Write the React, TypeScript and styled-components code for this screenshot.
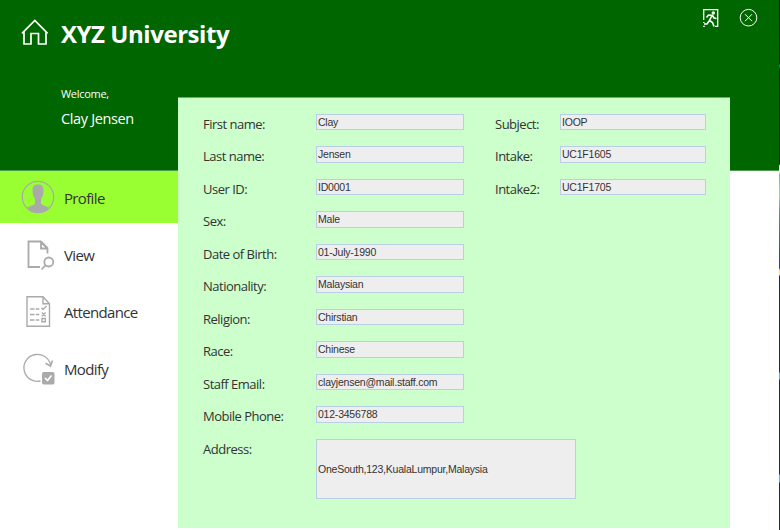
import React from "react";
import styled, { createGlobalStyle } from "styled-components";

const Global = createGlobalStyle`
  * { box-sizing: border-box; }
  html, body { margin: 0; padding: 0; background: #fff; overflow: hidden; }
`;

const ui = `"Open Sans", "Noto Sans", sans-serif`;

const Page = styled.div`
  width: 780px;
  height: 530px;
  display: grid;
  grid-template-columns: 178px 552px 49px 1px;
  grid-template-rows: 97px 74px 357px 2px;
  background: #fff;
  font-family: ${ui};
`;

const Header = styled.header`
  grid-area: 1 / 1 / 3 / 4;
  background: #006600;
  border-bottom: 1px solid #4d994d;
  color: #fff;
  display: flex;
  justify-content: space-between;
  padding: 8px 21px 0 21px;
`;

const Brand = styled.div`
  display: grid;
  grid-template-columns: 40px auto;
  grid-template-rows: 52px auto;
  align-content: start;
`;

const HomeMark = styled.div`
  padding-top: 10px;
  svg { display: block; }
`;

const Title = styled.h1`
  margin: 0;
  font-size: 24px;
  line-height: 52px;
  font-weight: 700;
  letter-spacing: -0.45px;
  white-space: nowrap;
`;

const Greeting = styled.div`
  grid-column: 2;
  padding-top: 25px;
`;

const Welcome = styled.div`
  font-size: 11px;
  line-height: 18px;
  letter-spacing: -0.3px;
`;

const UserName = styled.div`
  font-size: 14.5px;
  line-height: 31px;
  letter-spacing: -0.35px;
`;

const WindowActions = styled.div`
  display: flex;
  gap: 19px;
  align-items: flex-start;
  svg { display: block; }
`;

const Nav = styled.nav`
  grid-area: 3 / 1 / 4 / 2;
  display: flex;
  flex-direction: column;
  gap: 5px;
`;

const NavItem = styled.div<{ $active?: boolean }>`
  height: 52px;
  display: grid;
  grid-template-columns: 43px auto;
  align-items: center;
  padding-left: 21px;
  padding-top: 2px;
  color: #333;
  font-size: 15px;
  letter-spacing: -0.65px;
  background: ${(p) => (p.$active ? "#99ff33" : "transparent")};
  svg { display: block; margin-top: -3px; }
`;

const Panel = styled.main`
  grid-area: 2 / 2 / 4 / 3;
  background: #ccffcc;
  border-top: 1px solid #66b366;
  padding: 15.6px 0 0 25px;
  display: grid;
  grid-template-columns: 292px auto;
  align-content: start;
`;

const Column = styled.div``;

const Row = styled.div<{ $label: number }>`
  display: grid;
  grid-template-columns: ${(p) => p.$label}px auto;
  justify-content: start;
  height: 32.5px;
`;

const Label = styled.label`
  color: #333;
  font-size: 13px;
  line-height: 20px;
  letter-spacing: -0.5px;
  white-space: nowrap;
`;

const Field = styled.div<{ $w: number; $h?: number }>`
  width: ${(p) => p.$w}px;
  height: ${(p) => p.$h ?? 16.5}px;
  border: 1px solid #b8cfe5;
  background: #eee;
  color: #333;
  font-family: "Liberation Sans", Arial, sans-serif;
  font-size: 10.5px;
  letter-spacing: -0.22px;
  padding-left: 1px;
  display: flex;
  align-items: center;
  white-space: nowrap;
`;

const DesktopEdge = styled.div`
  grid-area: 1 / 4 / 5 / 5;
  background: linear-gradient(
    #101018 0, #0c1c30 64px, #1870a8 65px 67px, #101838 69px, #182050 164px,
    #f0f0f0 166px 172px, #50c0d8 175px, #80d8f0 195px, #6878b8 215px, #303878 268px,
    #ffd890 270px 275px, #20284c 276px 372px, #70a8d8 373px 379px,
    #20284c 380px 474px, #70a8d8 475px 482px, #20284c 483px
  );
`;

const HomeIcon = () => (
  <svg width="28" height="28" viewBox="0 0 28 28" fill="none" stroke="#fff" strokeWidth="1.7">
    <path d="M1 15.300 13.800 2.500l12.800 12.800M3 13.800V26h7V15.500h7.500V26H25V13.800" />
  </svg>
);

const ExitIcon = () => (
  <svg width="18" height="20" viewBox="0 0 18 20" fill="none" stroke="#fff">
    <path d="M1.700 12V1.700h14V19M13 18.300h3" strokeWidth="1.300" />
    <circle cx="11.300" cy="5" r="1.700" fill="#fff" stroke="none" />
    <path d="M4.500 9.500 6.500 7l3.500 .500-2.500 5 3 2 1.500 4M7.500 12.500 5 16H2M10.500 7.500l1.500 2.500 2.500 .5" strokeWidth="1.600" />
    <path d="M1 18.300h2M1 14.500h1.500" />
  </svg>
);

const CloseIcon = () => (
  <svg width="19" height="19" viewBox="0 0 19 19" fill="none" stroke="#fff" strokeWidth="1">
    <circle cx="9.500" cy="9.700" r="8.300" />
    <path d="M6 6.200l7 7M13 6.200l-7 7" />
  </svg>
);

const ProfileIcon = () => (
  <svg width="34" height="34" viewBox="0 0 34 34">
    <circle cx="17" cy="17" r="15.700" fill="none" stroke="#aaa" strokeWidth="1.200" />
    <path d="M11.500 10c0-4 2-5.500 5.500-5.500s5.500 1.500 5.500 5.500c0 4.500-1 7.500-2.500 9v4.500c1 2 6 2.500 8.500 4.500C25.500 31.500 21 33 17 33S8.500 31.500 5.500 28c2.500-2 7.500-2.500 8.500-4.500V19c-1.500-1.500-2.500-4.500-2.500-9z" fill="#aaa" />
  </svg>
);

const ViewIcon = () => (
  <svg width="34" height="34" viewBox="0 0 34 34" fill="none" stroke="#aaa" strokeWidth="1.800">
    <path d="M19 30H7.500V4.500H20l6.500 6.500v5.500M20 5v6.500h6M20.500 5.500l5 5" />
    <circle cx="27.800" cy="25" r="4.500" />
    <path d="M24.500 28.300 20.500 32.500" />
  </svg>
);

const AttendanceIcon = () => (
  <svg width="34" height="34" viewBox="0 0 34 34" fill="none" stroke="#aaa" strokeWidth="1.400">
    <path d="M6 2.700h16l6.500 7v22.600H6zM22 2.700v7h6.500" />
    <path d="M9 15h4.500M14.800 15h3.500M9 20.500h4.500M14.800 20.500h3.500M9 26h4.500M14.800 26h3.500" />
    <path d="M20.500 13.800l1.500 1.700 3.500-3.500M20.800 18.500l3.800 3.800M24.600 18.500l-3.800 3.800M20.900 24.500h3.400v3.200h-3.400z" />
  </svg>
);

const ModifyIcon = () => (
  <svg width="34" height="34" viewBox="0 0 34 34" fill="none" stroke="#aaa" strokeWidth="1.300">
    <path d="M19.500 30A13.500 13.500 0 1 1 29.500 13.500" />
    <path d="M24.500 12.300l5 2.700 2-5.500" strokeWidth="1.600" />
    <rect x="21" y="21" width="12.500" height="12.500" rx="1.800" fill="#aaa" stroke="none" />
    <path d="M24 27l2.500 2.500 4-5" stroke="#fff" strokeWidth="1.700" />
  </svg>
);

const NAV = [
  { label: "Profile", icon: <ProfileIcon />, active: true },
  { label: "View", icon: <ViewIcon /> },
  { label: "Attendance", icon: <AttendanceIcon /> },
  { label: "Modify", icon: <ModifyIcon /> },
];

const PERSONAL = [
  ["First name:", "Clay"],
  ["Last name:", "Jensen"],
  ["User ID:", "ID0001"],
  ["Sex:", "Male"],
  ["Date of Birth:", "01-July-1990"],
  ["Nationality:", "Malaysian"],
  ["Religion:", "Chirstian"],
  ["Race:", "Chinese"],
  ["Staff Email:", "clayjensen@mail.staff.com"],
  ["Mobile Phone:", "012-3456788"],
];

const STUDY = [
  ["Subject:", "IOOP"],
  ["Intake:", "UC1F1605"],
  ["Intake2:", "UC1F1705"],
];

export default function App() {
  return (
    <Page>
      <Global />
      <Header>
        <Brand>
          <HomeMark><HomeIcon /></HomeMark>
          <Title>XYZ University</Title>
          <Greeting>
            <Welcome>Welcome,</Welcome>
            <UserName>Clay Jensen</UserName>
          </Greeting>
        </Brand>
        <WindowActions>
          <ExitIcon />
          <CloseIcon />
        </WindowActions>
      </Header>
      <Nav>
        {NAV.map((n) => (
          <NavItem key={n.label} $active={n.active}>
            {n.icon}
            <span>{n.label}</span>
          </NavItem>
        ))}
      </Nav>
      <Panel>
        <Column>
          {PERSONAL.map(([label, value]) => (
            <Row key={label} $label={113}>
              <Label>{label}</Label>
              <Field $w={148}>{value}</Field>
            </Row>
          ))}
          <Row $label={113}>
            <Label>Address:</Label>
            <Field $w={260} $h={60}>OneSouth,123,KualaLumpur,Malaysia</Field>
          </Row>
        </Column>
        <Column>
          {STUDY.map(([label, value]) => (
            <Row key={label} $label={65}>
              <Label>{label}</Label>
              <Field $w={146}>{value}</Field>
            </Row>
          ))}
        </Column>
      </Panel>
      <DesktopEdge />
    </Page>
  );
}
